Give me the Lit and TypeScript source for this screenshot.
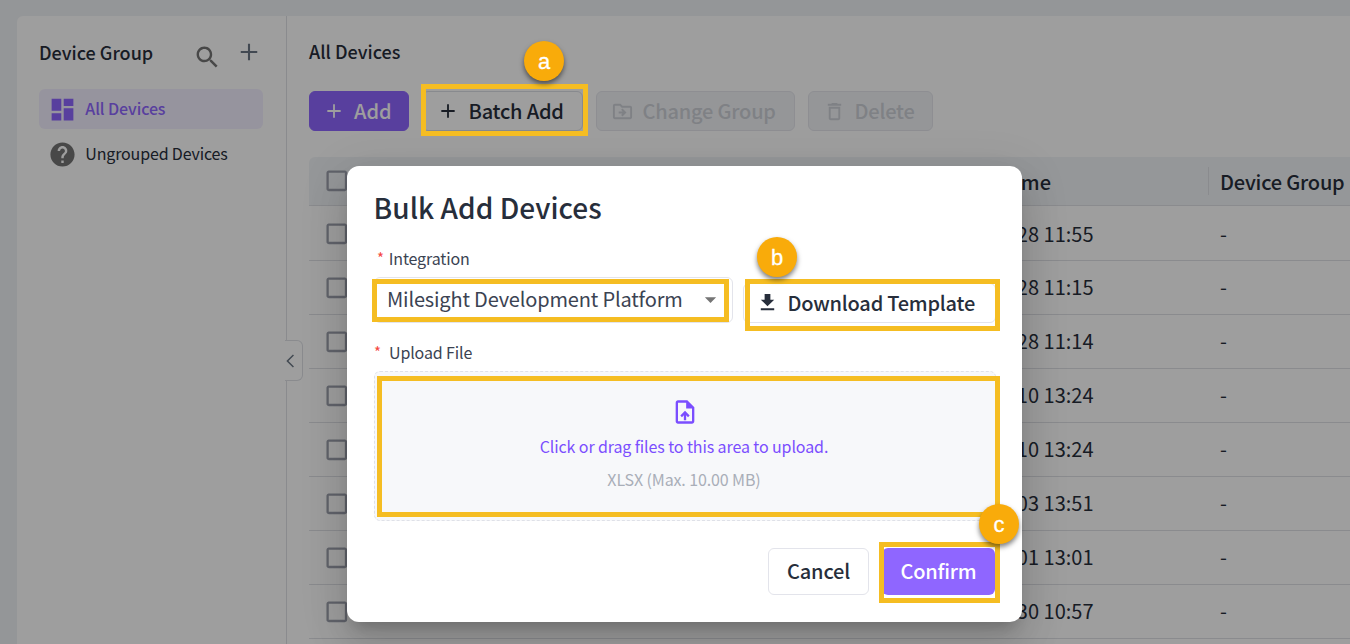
import { LitElement, html, css, svg } from "lit";
import { customElement, property } from "lit/decorators.js";

const ICONS: Record<string, string> = {
  search:
    "M15.5 14h-.79l-.28-.27C15.41 12.59 16 11.11 16 9.5 16 5.91 13.09 3 9.5 3S3 5.91 3 9.5 5.91 16 9.5 16c1.61 0 3.09-.59 4.23-1.57l.27.28v.79l5 4.99L20.49 19l-4.99-5zm-6 0C7.01 14 5 11.99 5 9.5S7.01 5 9.5 5 14 7.01 14 9.5 11.99 14 9.5 14z",
  plus: "M10.85 3h2.3v7.85H21v2.3h-7.85V21h-2.3v-7.85H3v-2.3h7.85z",
  add: "M10.9 4h2.2v6.9H20v2.2h-6.9V20h-2.2v-6.9H4v-2.2h6.9z",
  dashboard: "M3 13h8V3H3v10zm0 8h8v-6H3v6zm10 0h8V11h-8v10zm0-18v6h8V3h-8z",
  help: "M12 2C6.48 2 2 6.48 2 12s4.48 10 10 10 10-4.48 10-10S17.52 2 12 2zm1 17h-2v-2h2v2zm2.07-7.75-.9.92C13.45 12.9 13 13.5 13 15h-2v-.5c0-1.1.45-2.1 1.17-2.83l1.24-1.26c.37-.36.59-.86.59-1.41 0-1.1-.9-2-2-2s-2 .9-2 2H8c0-2.21 1.79-4 4-4s4 1.79 4 4c0 .88-.36 1.68-.93 2.25z",
  move: "M20 6h-8l-2-2H4c-1.1 0-2 .9-2 2v12c0 1.1.9 2 2 2h16c1.1 0 2-.9 2-2V8c0-1.1-.9-2-2-2zm0 12H4V6h5.17l2 2H20v10zm-8.16-4L10.59 15.75 12 17.17 16.17 13 12 8.83l-1.41 1.41L12.17 12H8v2z",
  trash:
    "M6 19c0 1.1.9 2 2 2h8c1.1 0 2-.9 2-2V7H6v12zM8 9h8v10H8V9zm7.5-5-1-1h-5l-1 1H5v2h14V4z",
  box: "M19 5v14H5V5h14m0-2H5c-1.1 0-2 .9-2 2v14c0 1.1.9 2 2 2h14c1.1 0 2-.9 2-2V5c0-1.1-.9-2-2-2z",
  download: "M19 9h-4V3H9v6H5l7 7 7-7zM5 18v2h14v-2H5z",
  caret: "m7 10 5 5 5-5z",
  chevron: "M15.9 3.2 17.3 4.6 9.9 12l7.4 7.4-1.4 1.4L7.1 12z",
  upload:
    "M14 2H6c-1.1 0-1.99.9-1.99 2L4 20c0 1.1.89 2 1.99 2H18c1.1 0 2-.9 2-2V8l-6-6zm4 18H6V4h7v5h5v11zM8 15.01l1.41 1.41L11 14.84V19h2v-4.16l1.59 1.59L16 15.01 12.01 11z",
};

@customElement("ui-icon")
export class UiIcon extends LitElement {
  @property() name = "";
  static styles = css`
    :host { display: block; flex: none; width: 24px; height: 24px; }
    svg { display: block; width: 100%; height: 100%; fill: currentColor; }
  `;
  render() {
    return html`<svg viewBox="0 0 24 24">${svg`<path d=${ICONS[this.name]}></path>`}</svg>`;
  }
}

@customElement("device-sidebar")
export class DeviceSidebar extends LitElement {
  static styles = css`
    :host { display: block; position: relative; box-sizing: border-box; width: 270px; flex: none; padding: 17px 23px 0 22px; border-right: 1px solid #dfe1e6; }
    .head { display: flex; align-items: center; height: 38px; }
    .title { flex: 1; font-size: 18px; font-weight: 500; color: #272e3b; }
    .search { width: 28.8px; height: 28.8px; margin: 10px 16.7px 0 0; color: #757575; }
    .plus { width: 22px; height: 22px; margin: 0 3px 0 0; color: #6b7785; }
    .list { display: flex; flex-direction: column; gap: 5px; padding-top: 18px; }
    .item { display: flex; align-items: center; height: 40px; border-radius: 6px; padding-left: 8.5px; gap: 8.8px; font-size: 16px; letter-spacing: -.15px; color: #272e3b; }
    .item.on { background: #f3efff; color: #8f66ff; font-weight: 500; letter-spacing: -.1px; }
    .item ui-icon { width: 29px; height: 29px; }
    .item.off ui-icon { color: #757575; }
    .fold { position: absolute; left: 268px; top: 324px; box-sizing: border-box; width: 18px; height: 41px; border: 1px solid #dfe1e6; border-left: 0; border-radius: 0 6px 6px 0; background: #fff; display: flex; align-items: center; }
    .fold ui-icon { width: 18px; height: 18px; margin-left: -4.5px; color: #6b7785; }
  `;
  render() {
    return html`
      <div class="head">
        <span class="title">Device Group</span>
        <ui-icon class="search" name="search"></ui-icon>
        <ui-icon class="plus" name="plus"></ui-icon>
      </div>
      <div class="list">
        <div class="item on"><ui-icon name="dashboard"></ui-icon><span>All Devices</span></div>
        <div class="item off"><ui-icon name="help"></ui-icon><span>Ungrouped Devices</span></div>
      </div>
      <div class="fold"><ui-icon name="chevron"></ui-icon></div>
    `;
  }
}

@customElement("device-table")
export class DeviceTable extends LitElement {
  static styles = css`
    :host { display: block; font-size: 20px; color: #272e3b; }
    .row { display: grid; grid-template-columns: 700px 199px 1fr; align-items: center; box-sizing: border-box; height: 54px; border-bottom: 1px solid #dfe1e6; }
    .row.first { height: 55px; padding-top: 2px; }
    .row.header { height: 49px; background: #f1f4f7; font-weight: 500; border-radius: 6px 0 0 0; }
    .check { width: 27.6px; height: 27.6px; margin-left: 14px; color: #9da1ad; }
    .time { justify-self: end; padding-right: 114.5px; white-space: nowrap; }
    .header .time { padding-right: 157px; padding-top: 2px; }
    .group { padding-left: 12px; white-space: nowrap; }
    .header .group { box-sizing: border-box; height: 28px; line-height: 30px; padding-left: 11px; letter-spacing: -.2px; border-left: 1px solid #dfe1e6; }
  `;
  private times = ["28 11:55", "28 11:15", "28 11:14", "10 13:24", "10 13:24", "03 13:51", "01 13:01", "30 10:57"];
  render() {
    return html`
      <div class="row header">
        <ui-icon class="check" name="box"></ui-icon>
        <span class="time">me</span>
        <span class="group">Device Group</span>
      </div>
      ${this.times.map(
        (t, i) => html`<div class="row ${i === 0 ? "first" : ""}">
          <ui-icon class="check" name="box"></ui-icon>
          <span class="time">${t}</span>
          <span class="group">-</span>
        </div>`
      )}
    `;
  }
}

@customElement("bulk-dialog")
export class BulkDialog extends LitElement {
  static styles = css`
    :host { display: block; box-sizing: border-box; width: 675px; height: 456px; padding: 21px 26px 27px 27px; border-radius: 12px; background: #fff; color: #272e3b;
      box-shadow: 0 11px 15px -7px rgba(0,0,0,.2), 0 24px 38px 3px rgba(0,0,0,.1), 0 9px 46px 8px rgba(0,0,0,.08); }
    .title { font-size: 28px; line-height: 40px; font-weight: 500; margin-left: -.4px; letter-spacing: .03px; }
    .label { display: flex; font-size: 16px; line-height: 24px; letter-spacing: -.13px; color: #3b4352; }
    .star { color: #f5483f; width: 15px; font-size: 15px; flex: none; }
    .integration { padding: 19px 0 0 3px; }
    .integration .star { width: 11.7px; }
    .fields { display: flex; gap: 10px; padding-top: 7px; align-items: flex-end; }
    .select { box-sizing: border-box; width: 358.5px; height: 46px; border: 1px solid #e3e4eb; border-radius: 6px; display: flex; align-items: center; justify-content: space-between; padding: 0 7.5px 2px 12px; font-size: 20px; letter-spacing: -.17px; color: #3b4352; }
    .select ui-icon { width: 27px; height: 27px; color: #757575; }
    .download { box-sizing: border-box; width: 253px; height: 40px; border: 1px solid #e3e4eb; border-radius: 6px; display: flex; align-items: center; gap: 9px; padding-left: 12px; font-size: 20px; font-weight: 500; letter-spacing: -.22px; white-space: nowrap; }
    .download ui-icon { width: 23px; height: 23px; margin-top: -1px; }
    .file { padding-top: 17px; }
    .drop { margin-top: 7px; box-sizing: border-box; height: 150px; border: 1px dashed #dfe1e8; border-radius: 6px; background: #f7f8fa; display: flex; flex-direction: column; align-items: center; padding: 26px 2px 0 0; font-size: 16px; line-height: 24px; letter-spacing: -.11px; }
    .drop ui-icon { width: 28px; height: 28px; margin-left: 1px; color: #7b4eff; }
    .hint { color: #7b4eff; padding-top: 8px; }
    .limit { color: #a9aeb8; padding-top: 9px; }
    .actions { display: flex; justify-content: flex-end; gap: 13px; padding: 27px 1px 0 0; }
    .btn { box-sizing: border-box; height: 47px; border-radius: 6px; display: flex; align-items: center; justify-content: center; font-size: 20px; font-weight: 500; letter-spacing: -.2px; }
    .cancel { width: 101px; border: 1px solid #e3e4eb; }
    .confirm { width: 113px; background: #8f66ff; color: #fff; }
  `;
  render() {
    return html`
      <div class="title">Bulk Add Devices</div>
      <div class="label integration"><span class="star">*</span><span>Integration</span></div>
      <div class="fields">
        <div class="select"><span>Milesight Development Platform</span><ui-icon name="caret"></ui-icon></div>
        <div class="download"><ui-icon name="download"></ui-icon><span>Download Template</span></div>
      </div>
      <div class="label file"><span class="star">*</span><span>Upload File</span></div>
      <div class="drop">
        <ui-icon name="upload"></ui-icon>
        <span class="hint">Click or drag files to this area to upload.</span>
        <span class="limit">XLSX (Max. 10.00 MB)</span>
      </div>
      <div class="actions">
        <div class="btn cancel">Cancel</div>
        <div class="btn confirm">Confirm</div>
      </div>
    `;
  }
}

@customElement("app-root")
export class AppRoot extends LitElement {
  static styles = css`
    :host { display: block; position: relative; width: 1350px; height: 644px; overflow: hidden; box-sizing: border-box; background: #eff2f5; padding: 16px 0 0 17px; font-family: "Noto Sans CJK SC", "Noto Sans", sans-serif; line-height: 1.448; color: #272e3b; }
    .card { display: flex; height: 640px; background: #fff; border-radius: 6px 0 0 0; }
    main { flex: 1; min-width: 0; padding: 21px 0 0 22px; }
    .heading { font-size: 18px; line-height: 28px; font-weight: 500; }
    .bar { display: flex; gap: 13px; padding: 26px 0; }
    .btn { box-sizing: border-box; height: 40px; border-radius: 6px; display: flex; align-items: center; font-size: 20px; font-weight: 500; letter-spacing: -.2px; border: 1px solid #dcdfe6; white-space: nowrap; }
    .btn ui-icon { width: 20px; height: 20px; }
    .add { width: 100px; padding-left: 14px; gap: 10px; background: #8f66ff; border-color: #8f66ff; color: #fff; letter-spacing: 0; }
    .batch { width: 161px; padding-left: 15px; gap: 10.5px; }
    .off { background: #f1f3f6; border-color: #e5e6ec; color: #cdd0d7; }
    .change { width: 199px; padding-left: 14px; gap: 8.5px; }
    .delete { width: 125px; padding-left: 14px; gap: 8.5px; }
    .change ui-icon, .delete ui-icon { width: 23px; height: 23px; }
    .mask { position: absolute; inset: 0; background: rgba(0,0,0,.38); }
    bulk-dialog { position: absolute; left: 347px; top: 166px; }
    .mark { position: absolute; box-sizing: border-box; border: 5px solid #f5bd22; }
    .m1 { left: 421px; top: 84px; width: 167px; height: 52px; }
    .m2 { left: 372px; top: 279px; width: 357px; height: 43px; }
    .m3 { left: 745px; top: 279px; width: 255px; height: 52px; }
    .m4 { left: 377px; top: 376px; width: 623px; height: 141px; }
    .m5 { left: 879px; top: 542px; width: 121px; height: 61px; }
    .badge { position: absolute; width: 40px; height: 40px; border-radius: 50%; background: #f9ab0a; color: #fff; text-align: center; font: 22px/41px "Liberation Sans", Arial, sans-serif; -webkit-text-stroke: .3px #fff; box-shadow: 0 3px 5px rgba(0,0,0,.5); }
    .b1 { left: 524px; top: 41px; }
    .b2 { left: 757px; top: 237px; }
    .b3 { left: 979px; top: 504px; }
  `;
  render() {
    return html`
      <div class="card">
        <device-sidebar></device-sidebar>
        <main>
          <div class="heading">All Devices</div>
          <div class="bar">
            <div class="btn add"><ui-icon name="add"></ui-icon><span>Add</span></div>
            <div class="btn batch"><ui-icon name="add"></ui-icon><span>Batch Add</span></div>
            <div class="btn off change"><ui-icon name="move"></ui-icon><span>Change Group</span></div>
            <div class="btn off delete"><ui-icon name="trash"></ui-icon><span>Delete</span></div>
          </div>
          <device-table></device-table>
        </main>
      </div>
      <div class="mask"></div>
      <bulk-dialog></bulk-dialog>
      <div class="mark m1"></div>
      <div class="mark m2"></div>
      <div class="mark m3"></div>
      <div class="mark m4"></div>
      <div class="mark m5"></div>
      <div class="badge b1">a</div>
      <div class="badge b2">b</div>
      <div class="badge b3">c</div>
    `;
  }
}
